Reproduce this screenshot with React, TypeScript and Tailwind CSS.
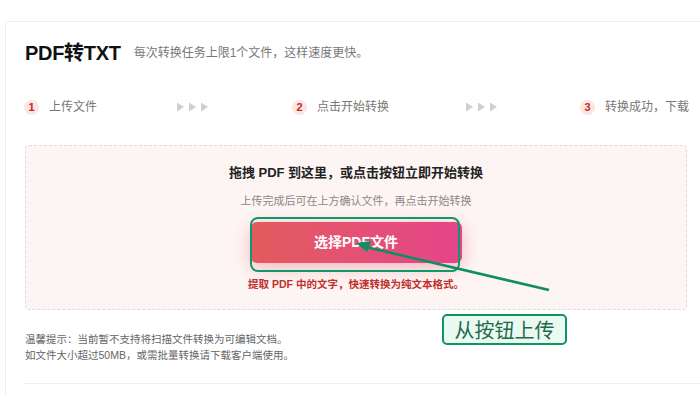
import React from "react";

const CJK = '"Liberation Sans", "Noto Sans CJK SC", sans-serif';

function Arrows() {
  return (
    <svg width="32" height="10" viewBox="0 0 32 10">
      <polygon points="0,0.5 7,5 0,9.5" fill="#cfcfcf" />
      <polygon points="12,0.5 19,5 12,9.5" fill="#cfcfcf" />
      <polygon points="24,0.5 31,5 24,9.5" fill="#cfcfcf" />
    </svg>
  );
}

function Step({ n, label }: { n: string; label: string }) {
  return (
    <div className="flex items-center">
      <div className="w-[15px] h-[15px] rounded-full bg-[#fbe6e1] flex items-center justify-center text-[11px] font-bold text-[#c62828] leading-none">
        {n}
      </div>
      <span className="ml-[10px] text-[12px] text-[#777] whitespace-nowrap">{label}</span>
    </div>
  );
}

export default function App() {
  return (
    <div className="relative w-[700px] h-[395px] overflow-hidden bg-white" style={{ fontFamily: CJK }}>
      <div className="pt-[21px] pl-[5px]">
        <div className="w-[760px] h-[400px] border-l border-t border-[#eeeeee] rounded-tl-[4px] pt-[19px] pl-[19px]">
          <div className="flex items-center h-[24px]">
            <span className="text-[20px] font-bold text-[#111] leading-none tracking-[-0.3px]">PDF转TXT</span>
            <span className="ml-[13px] text-[12px] text-[#777]">每次转换任务上限1个文件，这样速度更快。</span>
          </div>

          <div className="mt-[32px] h-[20px] flex items-center">
            <div className="w-[153px] -ml-[1px]">
              <Step n="1" label="上传文件" />
            </div>
            <div className="w-[115px]">
              <Arrows />
            </div>
            <div className="w-[174px]">
              <Step n="2" label="点击开始转换" />
            </div>
            <div className="w-[114px]">
              <Arrows />
            </div>
            <div>
              <Step n="3" label="转换成功，下载" />
            </div>
          </div>

          <div className="mt-[28px] w-[662px] h-[165px] border border-dashed border-[#dcdcdc] rounded-[4px] bg-[#fdf5f4] flex flex-col items-center pt-[18px]">
            <div className="h-[18px] leading-[18px] text-[13px] font-bold text-[#222]">拖拽 PDF 到这里，或点击按钮立即开始转换</div>
            <div className="mt-[11px] h-[16px] leading-[16px] text-[11px] text-[#888]">上传完成后可在上方确认文件，再点击开始转换</div>
            <div className="mt-[13px] w-[211px] h-[41px] rounded-[6px] bg-gradient-to-r from-[#e35b5b] to-[#e5448a] shadow-[0_4px_18px_rgba(230,80,100,0.4)] flex items-center justify-center text-[14px] font-bold text-white">
              选择PDF文件
            </div>
            <div className="mt-[14px] h-[14px] leading-[14px] text-[10.5px] font-bold text-[#c0302b]">提取 PDF 中的文字，快速转换为纯文本格式。</div>
          </div>

          <div className="mt-[21px] text-[10.5px] leading-[16px] text-[#666]">
            <div>温馨提示：当前暂不支持将扫描文件转换为可编辑文档。</div>
            <div>如文件大小超过50MB，或需批量转换请下载客户端使用。</div>
          </div>

          <div className="mt-[20px] border-t border-[#eeeeee]" />
        </div>
      </div>

      {/* annotation: box around button */}
      <div className="absolute left-[250px] top-[217px] w-[210px] h-[55px] border-2 border-[#0d9a6a] rounded-[8px] pointer-events-none" />

      {/* annotation arrow */}
      <svg className="absolute left-0 top-0 pointer-events-none" width="700" height="395" viewBox="0 0 700 395">
        <line x1="549" y1="290" x2="366" y2="247" stroke="#0e8f63" strokeWidth="2.6" />
        <polygon points="356,243 371,241 367,252" fill="#0e8f63" />
      </svg>

      {/* annotation label */}
      <div className="absolute left-[442px] top-[314px] w-[125px] h-[31px] border-2 border-[#0e9466] rounded-[5px] bg-[#eafaf1] flex items-center justify-center text-[20px] leading-none text-[#1d6b4c]" style={{ fontFamily: '"Noto Sans CJK SC", sans-serif' }}>
        从按钮上传
      </div>
    </div>
  );
}
